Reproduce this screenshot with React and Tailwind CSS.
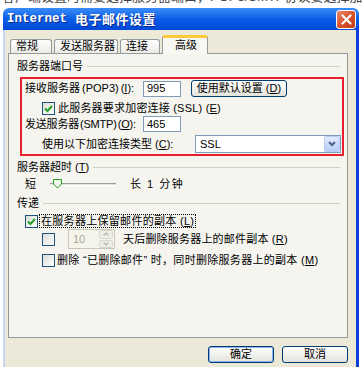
import React from "react";

const F = { fontFamily: '"Liberation Sans","Noto Sans CJK SC",sans-serif' };

function Check({ checked }) {
  return (
    <div className="w-[13px] h-[13px] border border-[#1C5180] bg-gradient-to-br from-[#DCDCD7] to-white flex items-center justify-center shrink-0">
      {checked && (
        <svg width="9" height="9" viewBox="0 0 9 9">
          <path d="M1 4.5 L3.5 7 L8 2" fill="none" stroke="#21A121" strokeWidth="2" />
        </svg>
      )}
    </div>
  );
}

function U({ children }) {
  return <span className="underline">{children}</span>;
}

function GroupLabel({ children, className = "" }) {
  return (
    <div className={"flex items-center h-[16px] pr-[7px] " + className}>
      <span className="whitespace-nowrap">{children}</span>
      <div className="flex-1 h-px bg-[#D0D0BF] ml-[4px]" />
    </div>
  );
}

function Input({ value, className = "" }) {
  return (
    <div className={"border border-[#7F9DB9] bg-white flex items-center pl-[3px] shrink-0 " + className}>
      {value}
    </div>
  );
}

function XPButton({ children, className = "" }) {
  return (
    <div className={"rounded-[3px] border border-[#003C74] bg-gradient-to-b from-white to-[#E3E3DB] flex items-center justify-center text-[11px] text-black shrink-0 " + className}>
      {children}
    </div>
  );
}

export default function App() {
  return (
    <div className="w-[363px] h-[367px] bg-white overflow-hidden" style={F}>
      <div className="h-[8px] overflow-hidden">
        <div className="-mt-[11px] pl-[2px] text-[13px] text-[#444] whitespace-nowrap leading-[15px]">
          客户端设置时需要选择服务器端口，POP3/SMTP协议要选择加密连接方式，这里选择默认连接方式
        </div>
      </div>
      <div className="ml-[3px] w-[356px] h-[359px] flex flex-col">
        {/* title bar */}
        <div className="h-[22px] rounded-t-[6px] bg-gradient-to-b from-[#3A8CF8] via-[#0A5DE8] to-[#0348D8] flex items-center pl-[4px] pr-[3px]">
          <span className="text-white font-bold text-[12.5px]" style={{ fontFamily: '"Liberation Mono",monospace', textShadow: "1px 1px 0 #0A2A8A" }}>
            Internet
          </span>
          <span className="text-white font-bold text-[13px] ml-[8px] tracking-[0.5px]" style={{ fontFamily: '"Noto Sans CJK SC",sans-serif', textShadow: "1px 1px 0 #0A2A8A" }}>
            电子邮件设置
          </span>
          <div className="flex-1" />
          <div className="w-[20px] h-[19px] rounded-[3px] border border-white bg-gradient-to-br from-[#E8896A] via-[#D8532C] to-[#C23A16] flex items-center justify-center">
            <svg width="11" height="11" viewBox="0 0 11 11">
              <path d="M1.5 1.5 L9.5 9.5 M9.5 1.5 L1.5 9.5" stroke="white" strokeWidth="2.2" strokeLinecap="round" />
            </svg>
          </div>
        </div>
        {/* body */}
        <div className="flex-1 bg-[#ECE9D8] border-l-[2px] border-l-[#C9D6F5] border-r-[3px] border-r-[#0B3ED8] pl-[3px] pr-[8px] flex flex-col text-[11px] text-black">
          {/* tabs */}
          <div className="h-[23px] flex items-end pl-[2px] gap-[2px]">
            {[
              ["常规", 42],
              ["发送服务器", 64],
              ["连接", 40],
            ].map(([t, w]) => (
              <div
                key={t}
                className="h-[14px] border border-b-0 border-[#919B9C] rounded-t-[3px] bg-gradient-to-b from-white to-[#ECEBE5] leading-[13px] pl-[5px] whitespace-nowrap overflow-hidden"
                style={{ width: w }}
              >
                {t}
              </div>
            ))}
            <div className="w-[46px] h-[19px] -mb-px relative border border-b-0 border-[#919B9C] rounded-t-[3px] bg-[#F7F7F3] border-t-[3px] border-t-[#FFC83C] leading-[14px] pl-[12px]">
              高级
            </div>
          </div>
          {/* panel */}
          <div className="h-[285px] border border-[#919B9C] bg-[#F5F4EF] pl-[8px] flex flex-col">
            <GroupLabel className="mt-[4px]">服务器端口号</GroupLabel>
            {/* red box */}
            <div className="mt-[3px] ml-[3px] w-[324px] h-[79px] border-2 border-[#E8202E] flex flex-col">
              <div className="mt-[1px] h-[17px] flex items-center pl-[3px]">
                <span className="w-[118px] whitespace-nowrap shrink-0">
                  接收服务器<span className="ml-[2px]">(POP3)</span><span className="ml-[2px]">(<U>I</U>):</span>
                </span>
                <Input value="995" className="w-[38px] h-[16px]" />
                <XPButton className="ml-[10px] w-[96px] h-[17px]">
                  使用默认设置 (<U>D</U>)
                </XPButton>
              </div>
              <div className="mt-[4px] h-[14px] flex items-center pl-[20px]">
                <Check checked />
                <span className="ml-[3px] whitespace-nowrap tracking-[0.2px]">
                  此服务器要求加密连接 (SSL) (<U>E</U>)
                </span>
              </div>
              <div className="mt-[1px] h-[16px] flex items-center pl-[3px]">
                <span className="w-[118px] whitespace-nowrap tracking-[-0.2px] shrink-0">
                  发送服务器<span className="ml-[1px]">(SMTP)</span><span className="ml-[1px]">(<U>O</U>):</span>
                </span>
                <Input value="465" className="w-[38px] h-[16px]" />
              </div>
              <div className="mt-[3px] h-[18px] flex items-center pl-[20px]">
                <span className="w-[153px] whitespace-nowrap shrink-0">
                  使用以下加密连接类型 (<U>C</U>):
                </span>
                <div className="w-[146px] h-[18px] border border-[#7F9DB9] bg-white flex items-center pl-[4px] shrink-0">
                  <span className="flex-1">SSL</span>
                  <div className="w-[16px] h-[16px] rounded-[2px] bg-gradient-to-b from-[#E3ECFE] to-[#B7CCF7] border border-[#B9CCF3] flex items-center justify-center">
                    <svg width="8" height="6" viewBox="0 0 8 6">
                      <path d="M1 1 L4 4 L7 1" fill="none" stroke="#4D6185" strokeWidth="2" />
                    </svg>
                  </div>
                </div>
              </div>
            </div>
            <GroupLabel className="mt-[3px]">
              服务器超时 (<U>T</U>)
            </GroupLabel>
            <div className="mt-[1px] h-[16px] grid grid-cols-[25px_80px_1fr] items-center pl-[8px]">
              <span>短</span>
              <svg width="80" height="12" viewBox="0 0 80 12" className="block">
                <rect x="0" y="5" width="66" height="1" fill="#9D9C99" />
                <rect x="0" y="6" width="66" height="1" fill="#E2E1DA" />
                <rect x="0" y="7" width="66" height="1" fill="#FFFFFF" />
                <path d="M3.5 1.5 H11.5 V6 L7.5 10 L3.5 6 Z" fill="#F3F3EE" stroke="#21A121" strokeWidth="1" />
              </svg>
              <span className="whitespace-nowrap tracking-[1.5px]">长 1 分钟</span>
            </div>
            <GroupLabel className="mt-[3px]">传递</GroupLabel>
            <div className="mt-[3px] h-[14px] flex items-center pl-[8px]">
              <Check checked />
              <span className="ml-[1px] px-[1px] border border-dotted border-black leading-[12px] whitespace-nowrap tracking-[0.3px]">
                在服务器上保留邮件的副本 (<U>L</U>)
              </span>
            </div>
            <div className="mt-[1px] h-[20px] flex items-center pl-[25px]">
              <Check />
              <div className="ml-[13px] w-[47px] h-[20px] shrink-0 border border-[#C9C7BA] bg-[#F5F4EA] flex items-center pl-[4px] text-[#A6A6A0]">
                <span className="flex-1">10</span>
                <div className="w-[14px] h-[18px] flex flex-col gap-px mr-px">
                  <div className="flex-1 rounded-[2px] bg-[#EDEDE6] border border-[#D8D8CE] flex items-center justify-center">
                    <svg width="6" height="4" viewBox="0 0 6 4"><path d="M0.5 3.5 L3 1 L5.5 3.5" fill="none" stroke="#B8B8AE" strokeWidth="1.2" /></svg>
                  </div>
                  <div className="flex-1 rounded-[2px] bg-[#EDEDE6] border border-[#D8D8CE] flex items-center justify-center">
                    <svg width="6" height="4" viewBox="0 0 6 4"><path d="M0.5 0.5 L3 3 L5.5 0.5" fill="none" stroke="#B8B8AE" strokeWidth="1.2" /></svg>
                  </div>
                </div>
              </div>
              <span className="ml-[8px] whitespace-nowrap tracking-[0.2px]">
                天后删除服务器上的邮件副本 (<U>R</U>)
              </span>
            </div>
            <div className="mt-[4px] h-[14px] flex items-center pl-[25px]">
              <Check />
              <span className="ml-[2px] whitespace-nowrap tracking-[0.3px]">
                删除 “已删除邮件” 时，同时删除服务器上的副本 (<U>M</U>)
              </span>
            </div>
          </div>
          {/* buttons */}
          <div className="mt-[8px] flex justify-end gap-[8px]">
            <XPButton className="w-[66px] h-[17px] shadow-[inset_0_0_0_1px_#8CB4F2]">确定</XPButton>
            <XPButton className="w-[66px] h-[17px]">取消</XPButton>
          </div>
        </div>
      </div>
    </div>
  );
}
